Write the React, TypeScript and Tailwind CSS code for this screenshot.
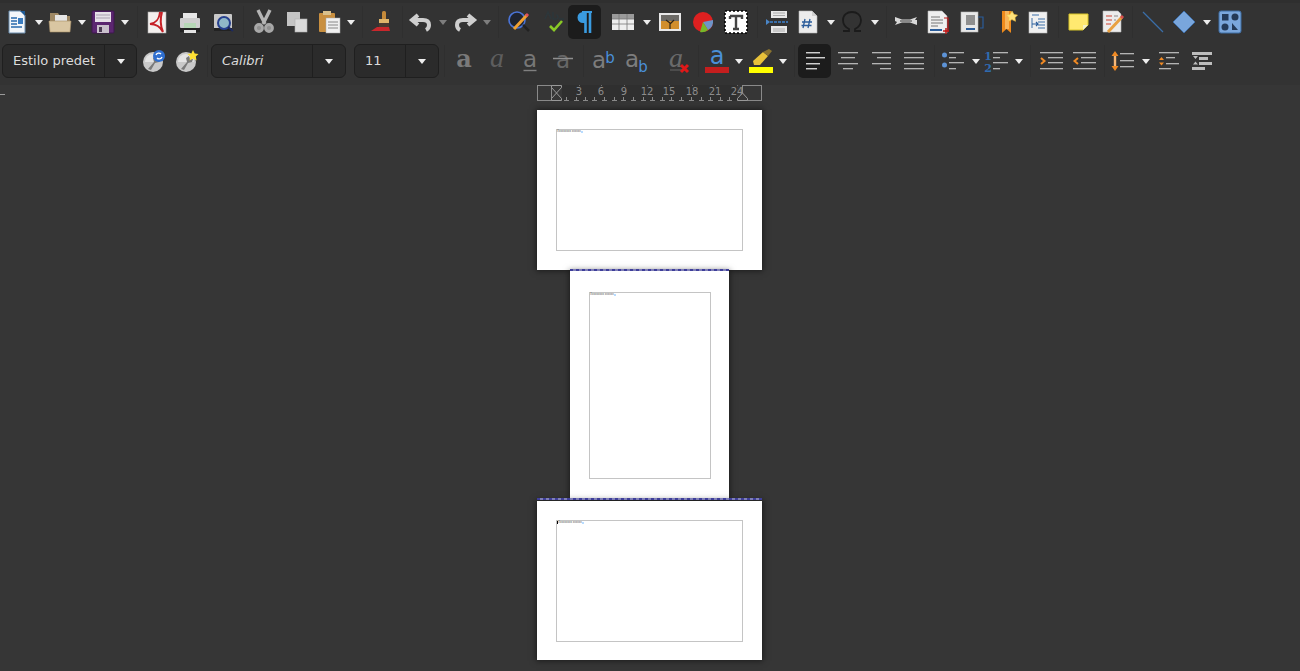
import type { ReactNode } from 'react'

const Caret = ({ c = '' }: { c?: string }) => (
  <div className={`w-[8px] h-[5px] shrink-0 ${c}`}>
    <svg width="8" height="5" viewBox="0 0 8 5"><path d="M0 0h8L4 5z" fill="#eeeeee" /></svg>
  </div>
)

const Sep = ({ c = '' }: { c?: string }) => <div className={`w-px h-[32px] bg-[#2f2f2f] shrink-0 ${c}`} />

const I = ({ c = '', children }: { c?: string; children: ReactNode }) => (
  <div className={`w-[24px] h-[24px] shrink-0 flex items-center justify-center ${c}`}>
    <svg width="24" height="24" viewBox="0 0 24 24" fill="none" className="overflow-visible">{children}</svg>
  </div>
)

// text lines in these icons are a light pixel row over a dark one
const Bars = ({ rows, hi = '#b4b4b4', lo = '#5c5c5c' }: { rows: number[][]; hi?: string; lo?: string }) => (
  <>
    {rows.map(([x1, x2, y]) => (
      <g key={`${x1}-${y}`}>
        <rect x={x1} y={y - 1} width={x2 - x1} height="1" fill={hi} />
        <rect x={x1} y={y} width={x2 - x1} height="1" fill={lo} />
      </g>
    ))}
  </>
)

const Wrench = () => (
  <>
    <circle cx="11" cy="13" r="10" fill="#c9c9c9" />
    <path d="M3 13a8 8 0 0116 0" fill="#e4e4e4" />
    <path d="M6 20l6-7-1-4 3-2 1 3 3 0-1 3-4 1-4 7z" fill="#7a7a7a" />
  </>
)

const Combo = ({ outer, inner, text, italic }: { outer: string; inner: string; text: string; italic?: boolean }) => (
  <div className={`${outer} h-[34px] shrink-0 flex rounded-[6px] border border-[#1f1f1f] bg-[#2b2b2b] text-[13px] text-[#dcdcdc] font-['DejaVu_Sans',sans-serif]`}>
    <div className={`${inner} h-full flex items-center pl-[10px] border-r border-[#1f1f1f] ${italic ? 'italic' : ''}`}>{text}</div>
    <div className="flex-1 flex items-center justify-center"><Caret /></div>
  </div>
)

function TopRow() {
  return (
    <div className="h-[34px] mt-[2px] flex items-center">
      <I c="ml-[5px]">
        <path d="M4 1h12l4 4v18H4z" fill="#f2f6fa" stroke="#6d8fb0" />
        <path d="M15 1h5v5z" fill="#1f5b96" />
        <path d="M6 8h6M6 11h6M6 14h6M6 17h11" stroke="#2a6bad" strokeWidth="1.4" />
        <rect x="13" y="8" width="5" height="6" fill="#3a7cc0" />
      </I>
      <Caret c="ml-[6px]" />
      <I c="ml-[5px]">
        <path d="M2 3h8l2 3h10v16H2z" fill="#9e8864" />
        <rect x="7" y="5" width="12" height="8" fill="#e6e6e6" />
        <path d="M1 11h22l-1 11H2z" fill="#d9c6a2" stroke="#a68d66" strokeWidth=".6" />
      </I>
      <Caret c="ml-[6px]" />
      <I c="ml-[5px]">
        <rect x="1" y="1" width="22" height="22" rx="1" fill="#5b2670" stroke="#3e174f" />
        <rect x="4" y="2" width="16" height="10" fill="#e6e0e8" />
        <path d="M5 5h14M5 8h14" stroke="#a99fb0" />
        <rect x="6" y="15" width="12" height="8" fill="#c9c0cc" />
        <rect x="8" y="17" width="3" height="5" fill="#4a3b52" />
      </I>
      <Caret c="ml-[6px]" />
      <Sep c="ml-[8px]" />
      <I c="ml-[7px]">
        <rect x="3" y="2" width="18" height="21" fill="#f4f0ee" stroke="#aaa" strokeWidth=".6" />
        <path d="M15 2c-1 8-4 11-10 12 6 0 10 2 13 8-3-7-3-13-1-20" stroke="#c62026" strokeWidth="2" />
      </I>
      <I c="ml-[9px]">
        <rect x="5" y="3" width="14" height="6" fill="#e8e8e8" />
        <rect x="2" y="8" width="20" height="10" rx="1" fill="#cfcfcf" />
        <rect x="6" y="13" width="12" height="7" fill="#b6d8b6" />
        <rect x="2" y="18" width="20" height="4" fill="#222" />
        <path d="M6 20h12v3H6z" fill="#e4e4e4" />
      </I>
      <I c="ml-[9px]">
        <rect x="3" y="4" width="18" height="16" rx="1" fill="#c9c9c9" />
        <rect x="3" y="18" width="18" height="3" fill="#222" />
        <circle cx="13" cy="13" r="6" fill="#8fb7c7" stroke="#26408f" strokeWidth="2" />
        <path d="M17 17l5 4" stroke="#1d2a60" strokeWidth="2" />
      </I>
      <Sep c="ml-[8px]" />
      <I c="ml-[8px]">
        <path d="M6 0l7 14M18 0l-7 14" stroke="#b5b5b5" strokeWidth="3.400" />
        <circle cx="7" cy="18" r="3.500" fill="#8f8f8f" stroke="#a8a8a8" strokeWidth="2.800" />
        <circle cx="17" cy="18" r="3.500" fill="#8f8f8f" stroke="#a8a8a8" strokeWidth="2.800" />
      </I>
      <I c="ml-[9px]">
        <rect x="2" y="2" width="13" height="14" fill="#c4c4c4" />
        <rect x="10" y="9" width="12" height="13" fill="#dadada" stroke="#b0b0b0" strokeWidth=".6" />
      </I>
      <I c="ml-[8px]">
        <rect x="2" y="3" width="16" height="19" rx="1" fill="#c98f3f" />
        <rect x="6" y="1" width="8" height="4" fill="#d9c08c" />
        <rect x="9" y="8" width="14" height="15" fill="#f0f0f0" stroke="#aaa" strokeWidth=".5" />
        <path d="M11 12h10M11 15h10M11 18h10" stroke="#888" />
      </I>
      <Caret c="ml-[6px]" />
      <Sep c="ml-[7px]" />
      <I c="ml-[7px]">
        <rect x="12" y="1" width="4" height="9" rx="1.500" fill="#c58a3a" />
        <rect x="9" y="9" width="10" height="4" fill="#e0b56a" />
        <path d="M9 13h10v5H9z" fill="#4a3a30" />
        <path d="M7 17h12l1 4H1z" fill="#c9272c" />
      </I>
      <Sep c="ml-[8px]" />
      <I c="ml-[6px]">
        <path d="M9 5L3 10l6 5" stroke="#cfcfcf" strokeWidth="4" />
        <path d="M4 10h10c5 0 6 3 6 5s-1 4-3 5" stroke="#cfcfcf" strokeWidth="4" />
      </I>
      <Caret c="ml-[6px] opacity-40" />
      <I c="ml-[6px]">
        <path d="M15 5l6 5-6 5" stroke="#cfcfcf" strokeWidth="4" />
        <path d="M20 10H10c-5 0-6 3-6 5s1 4 3 5" stroke="#cfcfcf" strokeWidth="4" />
      </I>
      <Caret c="ml-[6px] opacity-40" />
      <Sep c="ml-[7px]" />
      <I c="ml-[8px]">
        <circle cx="10" cy="10" r="8" fill="#1f2430" stroke="#4a74d8" strokeWidth="1.600" />
        <path d="M16 15l6 6" stroke="#222" strokeWidth="2.500" />
        <path d="M7 19L20 5" stroke="#f0a030" strokeWidth="3" />
        <path d="M19 6l2-2" stroke="#e0505a" strokeWidth="3" />
      </I>
      <I c="ml-[13px]">
        <path d="M1 9l3-7 3 7M9 2v7h3a2 2 0 000-4M15 9h5" stroke="#2d373b" strokeWidth="1.500" />
        <path d="M6 16l4 4 8-9" stroke="#8ac926" strokeWidth="2.600" />
      </I>
      <div className="w-[33px] h-[34px] shrink-0 rounded-[5px] bg-[#1c1c1c] flex items-center justify-center">
        <svg width="16" height="24" viewBox="0 0 16 24" fill="none">
          <path d="M8.500 2v21M13 2v21" stroke="#3a9be0" strokeWidth="2.600" />
          <path d="M8 2H6a5.500 5.500 0 000 11h2z" fill="#3a9be0" />
          <path d="M5 2h10" stroke="#3a9be0" strokeWidth="2" />
        </svg>
      </div>
      <I c="ml-[10px]">
        <rect x="1" y="4" width="22" height="16" fill="#eee" />
        <rect x="1" y="4" width="22" height="5" fill="#9a9a9a" />
        <path d="M1 14h22M8 4v16M16 4v16M1 9h22" stroke="#777" strokeWidth=".8" />
      </I>
      <Caret c="ml-[8px]" />
      <I c="ml-[7px]">
        <rect x="1" y="3" width="22" height="18" fill="#e8e8e8" />
        <rect x="3" y="5" width="18" height="14" fill="#d18e2c" />
        <rect x="3" y="5" width="18" height="6" fill="#6c6a66" />
        <path d="M12 19v-6l-4-3M12 14l4-4" stroke="#2e2416" strokeWidth="1.200" />
      </I>
      <I c="ml-[9px]">
        <circle cx="12" cy="12" r="10" fill="#dd2020" />
        <path d="M12 12l10-2a10 10 0 01-5 10z" fill="#6d94c8" />
        <path d="M12 12l5 8a10 10 0 01-8 2z" fill="#76b82a" />
      </I>
      <I c="ml-[9px]">
        <rect x="1" y="1" width="22" height="22" fill="#fff" stroke="#000" strokeWidth="1.600" strokeDasharray="2 2" />
        <path d="M6 6h12v3M12 6v13M9 19h6M6 6v3" stroke="#444" strokeWidth="2.400" />
      </I>
      <Sep c="ml-[9px]" />
      <I c="ml-[7px]">
        <path d="M6 1h16v7H6zM6 16h16v7H6z" fill="#e8e8e8" />
        <path d="M8 3h12M8 5.500h12M8 19h12M8 21h12" stroke="#aaa" />
        <path d="M5 12h18" stroke="#3a6ea8" strokeWidth="2" strokeDasharray="3 1" />
        <path d="M1 9l4 3-4 3z" fill="#4a86c8" />
      </I>
      <I c="ml-[7px]">
        <path d="M3 1h13l5 5v17H3z" fill="#ececec" stroke="#bbb" strokeWidth=".6" />
        <path d="M16 1v5h5" fill="#d0d0d0" />
        <path d="M9 9l-2 9M14 9l-2 9M6 12h10M5.500 15.500h10" stroke="#2a5c9a" strokeWidth="1.300" />
      </I>
      <Caret c="ml-[7px]" />
      <I c="ml-[5px]">
        <path d="M3 21h6v-2C5 17 3 14 3 10c0-5 4-8 9-8s9 3 9 8c0 4-2 7-6 9v2h6" stroke="#1b1b1b" strokeWidth="1.800" />
      </I>
      <Caret c="ml-[7px]" />
      <Sep c="ml-[7px]" />
      <I c="ml-[7px]">
        <path d="M1 7l7 2.500h8L23 7l-2 3 2 0v5l-7-2.500H8L1 15l2-3-2-1z" fill="#d8d8d8" />
        <path d="M6 11h12" stroke="#555" strokeWidth="1.200" />
      </I>
      <I c="ml-[8px]">
        <path d="M2 1h14l5 5v17H2z" fill="#efefef" stroke="#bbb" strokeWidth=".6" />
        <path d="M5 7h9M5 10h12M5 13h12M5 16h7" stroke="#777" />
        <rect x="4" y="19" width="12" height="2" fill="#2a5c9a" />
        <path d="M18 8h4v13h-3" stroke="#c01818" strokeWidth="1.200" />
        <path d="M17 21h6M20 18v6" stroke="#c01818" strokeWidth="1.500" />
      </I>
      <I c="ml-[10px]">
        <rect x="1" y="2" width="17" height="20" fill="#e8e8e8" stroke="#bbb" strokeWidth=".6" />
        <rect x="6" y="5" width="9" height="10" fill="#8f8f8f" />
        <rect x="6" y="18" width="9" height="2" fill="#2a5c9a" />
        <path d="M18 7h5v11h-3" stroke="#2a5c9a" strokeWidth="1.200" />
      </I>
      <I c="ml-[11px]">
        <path d="M7 1h9v22l-4.500-4L7 23z" fill="#ee8a1c" />
        <path d="M10 1h4v18h-4z" fill="#f8b45a" />
        <path d="M17 1l2 3.500 3.500.6-2.500 2.600.5 3.600-3.500-1.700-3.500 1.700.5-3.600L11.500 5 15 4.500z" fill="#ffe27a" stroke="#f0c040" strokeWidth=".6" />
      </I>
      <I c="ml-[7px]">
        <rect x="3" y="2" width="18" height="21" fill="#f0f0f0" stroke="#bbb" strokeWidth=".6" />
        <path d="M6 5h7M6 8v10M12 9h7M12 12h7M12 15h7M12 18h7" stroke="#3a6ea8" />
        <path d="M6 14h6M10 12l2 2-2 2" stroke="#2a5c9a" strokeWidth="1.200" />
      </I>
      <Sep c="ml-[8px]" />
      <I c="ml-[8px]">
        <path d="M2 4h19v11l-5 5H2z" fill="#ffe970" stroke="#d8c528" />
        <path d="M21 15h-5v5z" fill="#f4f1c8" />
      </I>
      <I c="ml-[9px]">
        <path d="M3 1h15l3 3v18H3z" fill="#ececec" stroke="#bbb" strokeWidth=".6" />
        <path d="M6 6h6M6 10h6M6 14h5" stroke="#d04030" strokeWidth="1.200" />
        <path d="M14 6h4M14 10h2" stroke="#888" />
        <path d="M8 22L22 7" stroke="#e8a040" strokeWidth="3" />
        <path d="M21 8l2-2" stroke="#d85050" strokeWidth="3" />
      </I>
      <Sep c="ml-[8px]" />
      <I c="ml-[8px]">
        <path d="M2 2l20 20" stroke="#3a6ea8" strokeWidth="1.300" />
      </I>
      <I c="ml-[7px]">
        <path d="M12 1l11 11-11 11L1 12z" fill="#79a6dc" stroke="#3f6ea6" />
      </I>
      <Caret c="ml-[7px]" />
      <I c="ml-[7px]">
        <rect x="1" y="1" width="22" height="22" rx="2" fill="#7ba7dc" stroke="#3f6ea6" />
        <rect x="4" y="4" width="6.500" height="6.500" fill="#243a58" />
        <circle cx="17" cy="7" r="3.500" fill="#243a58" />
        <circle cx="7" cy="17" r="3.500" fill="#243a58" />
        <path d="M14 13l6 7h-6z" fill="#243a58" />
      </I>
    </div>
  )
}

function FormatRow() {
  return (
    <div className="h-[34px] mt-[5px] flex items-center">
      <div className="ml-[2px] flex shrink-0">
        <Combo outer="w-[135px]" inner="w-[102px]" text="Estilo predet" />
      </div>
      <I c="ml-[5px]">
        <Wrench />
        <circle cx="17" cy="7" r="6" fill="#2f6fd0" />
        <path d="M14 6a3 3 0 015-1M20 8a3 3 0 01-5 1" stroke="#fff" strokeWidth="1.300" />
      </I>
      <I c="ml-[9px]">
        <Wrench />
        <path d="M18 1l1.700 3.400 3.800.6-2.700 2.600.7 3.800-3.500-1.800-3.500 1.800.7-3.800L12.500 5l3.800-.6z" fill="#ffe033" />
      </I>
      <Sep c="ml-[8px]" />
      <div className="ml-[3px] flex shrink-0">
        <Combo outer="w-[135px]" inner="w-[101px]" text="Calibri" italic />
      </div>
      <div className="ml-[8px] flex shrink-0">
        <Combo outer="w-[85px]" inner="w-[51px]" text="11" />
      </div>
      <Sep c="ml-[5px]" />
      <I c="ml-[7px]">
        <text x="12" y="18" textAnchor="middle" fontSize="24" fontWeight="700" fontFamily="DejaVu Serif, serif" fill="#7a7a7a">a</text>
      </I>
      <I c="ml-[9px]">
        <text x="12" y="18" textAnchor="middle" fontSize="28" fontStyle="italic" fontFamily="Liberation Serif, serif" fill="#5e5e5e">a</text>
      </I>
      <I c="ml-[9px]">
        <text x="12" y="18" textAnchor="middle" fontSize="23" fontFamily="DejaVu Sans, sans-serif" fill="#777">a</text>
        <path d="M5.500 21.500h13" stroke="#808080" strokeWidth="1.400" />
      </I>
      <I c="ml-[9px]">
        <text x="12" y="19" textAnchor="middle" fontSize="23" fontFamily="DejaVu Sans, sans-serif" fill="#666">a</text>
        <path d="M2 9.500h20" stroke="#8f8f8f" strokeWidth="1.500" />
      </I>
      <Sep c="ml-[8px]" />
      <I c="ml-[7px]">
        <text x="8" y="18.500" textAnchor="middle" fontSize="23" fontFamily="DejaVu Sans, sans-serif" fill="#7d7d7d">a</text>
        <text x="19" y="14" textAnchor="middle" fontSize="15" fontFamily="DejaVu Sans, sans-serif" fill="#4a90d9">b</text>
      </I>
      <I c="ml-[10px]">
        <text x="7" y="18" textAnchor="middle" fontSize="23" fontFamily="DejaVu Sans, sans-serif" fill="#7d7d7d">a</text>
        <text x="18" y="23" textAnchor="middle" fontSize="15" fontFamily="DejaVu Sans, sans-serif" fill="#4a90d9">b</text>
      </I>
      <I c="ml-[18px]">
        <text x="9" y="18" textAnchor="middle" fontSize="28" fontStyle="italic" fontFamily="Liberation Serif, serif" fill="#6a6a6a">a</text>
        <path d="M3 21h12" stroke="#666" />
        <path d="M14 16l7 7M21 16l-7 7" stroke="#e01818" strokeWidth="3" />
      </I>
      <Sep c="ml-[7px]" />
      <I c="ml-[6px]">
        <text x="12" y="15" textAnchor="middle" fontSize="24" fontFamily="DejaVu Sans, sans-serif" fill="#4a8fd8">a</text>
        <rect x="0" y="18" width="24" height="6" fill="#c41e1e" />
      </I>
      <Caret c="ml-[6px]" />
      <I c="ml-[6px]">
        <path d="M4 12L14 3l5 4-8 9H5z" fill="#e8c23a" />
        <path d="M14 3l6-3 3 2-4 5z" fill="#8a7330" />
        <rect x="0" y="18" width="24" height="6" fill="#ffff00" />
      </I>
      <Caret c="ml-[6px]" />
      <Sep c="ml-[7px]" />
      <div className="ml-[3px] w-[33px] h-[34px] shrink-0 rounded-[5px] bg-[#1c1c1c] flex items-center justify-center">
        <svg width="24" height="24" viewBox="0 0 24 24" fill="none">
          <Bars rows={[[3, 17, 4], [3, 22, 9], [3, 17, 15], [3, 14, 20]]} hi="#cfcfcf" lo="#6a6a6a" />
        </svg>
      </div>
      <I c="ml-[5px]">
        <Bars rows={[[2, 22, 4], [5, 19, 9], [2, 22, 15], [7, 17, 20]]} />
      </I>
      <I c="ml-[9px]">
        <Bars rows={[[3, 22, 4], [8, 22, 9], [3, 22, 15], [11, 22, 20]]} />
      </I>
      <I c="ml-[9px]">
        <Bars rows={[[2, 22, 4], [2, 22, 9], [2, 22, 15], [2, 22, 20]]} />
      </I>
      <Sep c="ml-[8px]" />
      <I c="ml-[6px]">
        <circle cx="3.500" cy="6" r="2.500" fill="#5d93d6" />
        <circle cx="3.500" cy="16" r="2.500" fill="#5d93d6" />
        <Bars rows={[[8, 23, 4], [8, 15, 9], [8, 23, 14], [8, 15, 20]]} />
      </I>
      <Caret c="ml-[7px]" />
      <I c="ml-[5px]">
        <text x="3" y="11" textAnchor="middle" fontSize="11" fontWeight="700" fontFamily="DejaVu Serif, serif" fill="#2f6bb0">1</text>
        <text x="3" y="23" textAnchor="middle" fontSize="11" fontWeight="700" fontFamily="DejaVu Serif, serif" fill="#2f6bb0">2</text>
        <Bars rows={[[8, 23, 4], [8, 15, 9], [8, 23, 14], [8, 15, 20]]} />
      </I>
      <Caret c="ml-[6px]" />
      <Sep c="ml-[7px]" />
      <I c="ml-[9px]">
        <Bars rows={[[0, 23, 4], [8, 23, 9], [8, 23, 14], [0, 23, 20]]} />
        <path d="M1 9l3.500 3L1 15" stroke="#f08a24" strokeWidth="2" />
      </I>
      <I c="ml-[8px]">
        <Bars rows={[[1, 24, 4], [9, 24, 9], [9, 24, 14], [1, 24, 20]]} />
        <path d="M6 9l-3.500 3L6 15" stroke="#f08a24" strokeWidth="2" />
      </I>
      <Sep c="ml-[8px]" />
      <I c="ml-[5px]">
        <path d="M5 6v12" stroke="#f6b878" strokeWidth="2.400" />
        <path d="M1.500 7L5 2l3.500 5zM1.500 17L5 22l3.500-5z" fill="#f08a24" />
        <Bars rows={[[10, 24, 5], [10, 24, 12], [10, 24, 18]]} />
      </I>
      <Caret c="ml-[8px]" />
      <I c="ml-[7px]">
        <Bars rows={[[2, 22, 4], [9, 18, 9], [9, 22, 15], [2, 14, 20]]} />
        <path d="M2 11l2.500-3L7 11zM2 13.500l2.500 3 2.500-3z" fill="#f08a24" />
      </I>
      <I c="ml-[9px]">
        <rect x="2" y="3" width="20" height="3" fill="#bdbdbd" />
        <rect x="9" y="8" width="9" height="3" fill="#bdbdbd" />
        <rect x="9" y="13" width="13" height="3" fill="#bdbdbd" />
        <rect x="2" y="18" width="13" height="3" fill="#bdbdbd" />
        <path d="M3 7h5l-2.500 3zM3 15.500h5L5.500 12.500z" fill="#bdbdbd" />
      </I>
    </div>
  )
}

function Ruler() {
  const nums = [
    [579, '3'], [601, '6'], [624, '9'], [647, '12'], [669, '15'], [692, '18'], [715, '21'], [737, '24'],
  ] as const
  const ticks = [566, 576, 585, 594, 604, 614, 623, 633, 643, 652, 662, 671, 681, 691, 701, 710, 720, 729]
  return (
    <svg width="240" height="17" viewBox="530 85 240 17" fill="none" className="block shrink-0 self-start">
      <rect x="562" y="85" width="175" height="16" fill="#2f2f2f" />
      <rect x="537.500" y="85.500" width="14" height="15" stroke="#8a8a8a" />
      <rect x="742.500" y="85.500" width="19" height="15" stroke="#8a8a8a" />
      <path d="M551.500 85.500h10v2l-5 5.500 5 5.500v2h-10v-2l5-5.500-5-5.500z" fill="#363636" stroke="#9a9a9a" />
      <path d="M742.500 93l5 5.500v2h-10v-2z" fill="#363636" stroke="#9a9a9a" />
      {ticks.map((x) => (
        <path key={x} d={`M${x}.5 97v3M${x - 2} 100.500h5`} stroke="#8a8a8a" />
      ))}
      {nums.map(([x, n]) => (
        <g key={n}>
          <rect x={x} y="85" width="1" height="1" fill="#6c6c6c" />
          <text x={x} y="95" textAnchor="middle" fontSize="10" fontFamily="DejaVu Sans, sans-serif" fill="#8c8c8c">{n}</text>
        </g>
      ))}
    </svg>
  )
}

const Page = ({ size, frame, text, cursor }: { size: string; frame: string; text: string; cursor?: boolean }) => (
  <div className={`${size} shrink-0 bg-white shadow-[0_0_6px_1px_rgba(0,0,0,0.5)]`}>
    <div className={`${frame} border border-[#c4c4c4]`}>
      <div className={`flex items-center h-[3px] text-[3px] leading-[3px] text-[#555] font-['Liberation_Sans',sans-serif] whitespace-nowrap ${cursor ? 'border-l border-black' : ''}`}>
        {text}
        <span className="w-[2px] h-[2px] bg-[#b8dcff]" />
      </div>
    </div>
  </div>
)

const PageBreak = ({ w }: { w: string }) => (
  <div className={`${w} h-[2px] relative z-10 bg-[repeating-linear-gradient(90deg,#3f3f9a_0_3px,#7f7fb8_3px_6px)]`} />
)

export default function App() {
  return (
    <div className="relative w-[1300px] h-[671px] overflow-hidden bg-[#363636] flex flex-col">
      <div className="absolute left-0 top-[94px] w-[5px] h-px bg-[#9a9a9a]" />
      <div className="h-[85px] shrink-0 bg-[#333333] border-t-[3px] border-[#2f2f2f]">
        <TopRow />
        <FormatRow />
      </div>
      <div className="ml-[530px] w-[239px] flex flex-col items-center">
        <Ruler />
        <div className="h-[8px] shrink-0" />
        <Page size="w-[225px] h-[160px] pt-[19px] pl-[19px]" frame="w-[187px] h-[122px]" text="Xxxxxxxxx xxxxxx" />
        <PageBreak w="w-[159px] -mt-px" />
        <Page size="w-[159px] h-[227px] pt-[21px] pl-[19px]" frame="w-[122px] h-[187px]" text="Xxxxxxxxx xxxxxx" />
        <PageBreak w="w-[225px]" />
        <div className="h-px shrink-0" />
        <Page size="w-[225px] h-[159px] pt-[19px] pl-[19px]" frame="w-[187px] h-[122px]" text="Xxxxxxxxx xxxxxx" cursor />
      </div>
    </div>
  )
}
